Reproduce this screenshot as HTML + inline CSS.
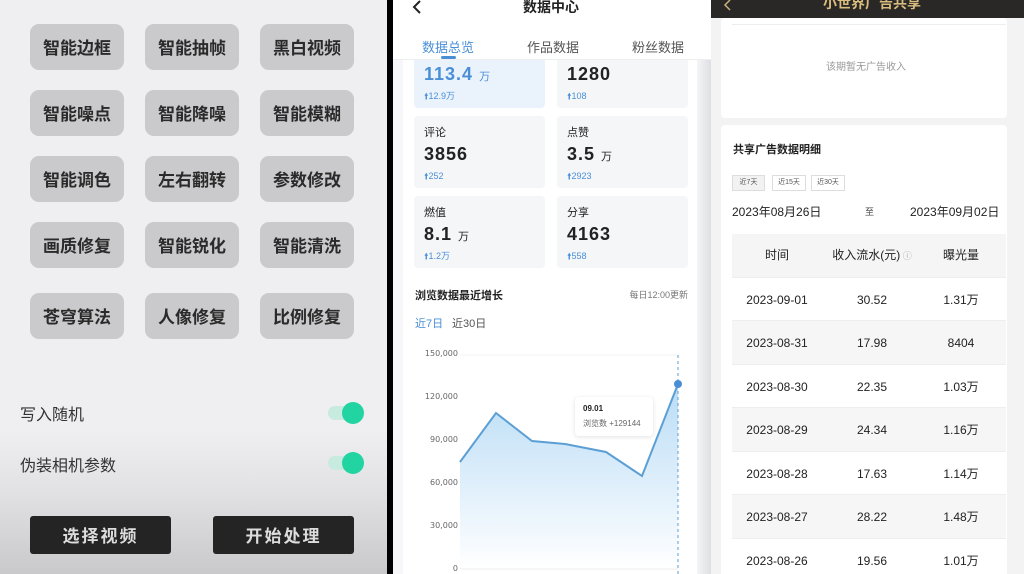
<!DOCTYPE html>
<html><head><meta charset="utf-8"><style>
*{margin:0;padding:0;box-sizing:border-box}
html,body{width:1024px;height:574px;overflow:hidden}
body{position:relative;font-family:"Liberation Sans","Noto Sans CJK SC",sans-serif;background:#000}
.a{position:absolute}
#L{left:0;top:0;width:387px;height:574px;background:linear-gradient(#efeef0 0,#efeef0 430px,#e2e2e4 490px,#c9c9cb 574px)}
.b{position:absolute;width:94px;height:46px;background:#cacacc;border-radius:9px;color:#2a2a2a;font-size:17px;font-weight:bold;text-align:center;line-height:46px;font-family:"Noto Sans CJK SC",sans-serif}
.lab{position:absolute;left:20px;font-size:16px;color:#333;font-family:"Noto Sans CJK SC",sans-serif}
.tg{position:absolute;left:328px;width:34px;height:14px;border-radius:7px;background:#c7ebdf}
.tg i{position:absolute;right:-2px;top:-4px;width:22px;height:22px;border-radius:50%;background:#22d4a2}
.db{position:absolute;top:516px;width:141px;height:38px;background:#242424;border-radius:3px;color:#ddd;font-size:17px;font-weight:bold;text-align:center;line-height:38px;letter-spacing:2px;font-family:"Noto Sans CJK SC",sans-serif}
#M{left:393px;top:0;width:318px;height:574px;background:#fff;overflow:hidden}
.c{position:absolute;width:131px;height:72px;background:#f5f6f8;border-radius:4px}
.c .t{position:absolute;left:10px;top:8px;font-size:11px;color:#222}
.c .v{position:absolute;left:10px;top:28px;font-size:18px;font-weight:bold;color:#222;letter-spacing:1px}
.c .v small{font-size:11px;font-weight:normal}
.c .u{position:absolute;left:10px;top:53px;font-size:9px;color:#4a8fd6}
.yl{position:absolute;right:253px;font-size:8px;color:#666;font-family:"DejaVu Sans",sans-serif}
#R{left:711px;top:0;width:313px;height:574px;background:#f3f3f3;overflow:hidden}
.rw{position:absolute;left:21px;width:274px;height:44px;font-size:12px;color:#222}
.rw span{position:absolute;top:0;line-height:44px;text-align:center;width:90px}
</style></head><body>
<div id="L" class="a">
<div class="b" style="left:30px;top:24px">智能边框</div>
<div class="b" style="left:145px;top:24px">智能抽帧</div>
<div class="b" style="left:260px;top:24px">黑白视频</div>
<div class="b" style="left:30px;top:90px">智能噪点</div>
<div class="b" style="left:145px;top:90px">智能降噪</div>
<div class="b" style="left:260px;top:90px">智能模糊</div>
<div class="b" style="left:30px;top:156px">智能调色</div>
<div class="b" style="left:145px;top:156px">左右翻转</div>
<div class="b" style="left:260px;top:156px">参数修改</div>
<div class="b" style="left:30px;top:222px">画质修复</div>
<div class="b" style="left:145px;top:222px">智能锐化</div>
<div class="b" style="left:260px;top:222px">智能清洗</div>
<div class="b" style="left:30px;top:293px">苍穹算法</div>
<div class="b" style="left:145px;top:293px">人像修复</div>
<div class="b" style="left:260px;top:293px">比例修复</div>
<div class="lab" style="top:401px">写入随机</div>
<div class="tg" style="top:406px"><i></i></div>
<div class="lab" style="top:452px">伪装相机参数</div>
<div class="tg" style="top:456px"><i></i></div>
<div class="db" style="left:30px">选择视频</div>
<div class="db" style="left:213px">开始处理</div>
</div>
<div id="M" class="a">
<div class="a" style="left:304px;top:60px;width:14px;height:514px;background:linear-gradient(90deg,#f4f5f7,#dedfe3)"></div>
<div class="a" style="left:0;top:60px;width:10px;height:514px;background:#f7f7f9"></div>
<div class="c" style="left:21px;top:36px;background:#eaf3fc"><div class="v" style="color:#4a8fd6">113.4 <small>万</small></div><div class="u">🠙12.9万</div></div>
<div class="c" style="left:164px;top:36px"><div class="v">1280</div><div class="u">🠙108</div></div>
<div class="c" style="left:21px;top:116px"><div class="t">评论</div><div class="v">3856</div><div class="u">🠙252</div></div>
<div class="c" style="left:164px;top:116px"><div class="t">点赞</div><div class="v">3.5 <small>万</small></div><div class="u">🠙2923</div></div>
<div class="c" style="left:21px;top:196px"><div class="t">燃值</div><div class="v">8.1 <small>万</small></div><div class="u">🠙1.2万</div></div>
<div class="c" style="left:164px;top:196px"><div class="t">分享</div><div class="v">4163</div><div class="u">🠙558</div></div>
<div class="a" style="left:0;top:0;width:318px;height:60px;background:#fff;z-index:5;border-bottom:1px solid #eee">
<svg class="a" style="left:18px;top:0" width="14" height="16"><path d="M9 1 L3 7 L9 13" stroke="#222" stroke-width="2" fill="none"/></svg>
<div class="a" style="left:130px;top:-3px;font-size:14px;font-weight:bold;color:#222">数据中心</div>
<div class="a" style="left:29px;top:37px;font-size:13px;color:#4a8fd6">数据总览</div>
<div class="a" style="left:134px;top:37px;font-size:13px;color:#555">作品数据</div>
<div class="a" style="left:239px;top:37px;font-size:13px;color:#555">粉丝数据</div>
<div class="a" style="left:48px;top:56px;width:15px;height:3px;background:#4a8fd6;border-radius:2px"></div>
</div>
<div class="a" style="left:22px;top:287px;font-size:11px;font-weight:bold;color:#222">浏览数据最近增长</div>
<div class="a" style="right:23px;top:288px;font-size:9px;color:#777">每日12:00更新</div>
<div class="a" style="left:22px;top:315px;font-size:11px;color:#4a8fd6">近7日</div>
<div class="a" style="left:59px;top:315px;font-size:11px;color:#555">近30日</div>
<div class="yl" style="top:349px">150,000</div>
<div class="yl" style="top:392px">120,000</div>
<div class="yl" style="top:435px">90,000</div>
<div class="yl" style="top:478px">60,000</div>
<div class="yl" style="top:521px">30,000</div>
<div class="yl" style="top:564px">0</div>
<svg class="a" style="left:0;top:340px" width="318" height="234">
<defs><linearGradient id="g" x1="0" y1="0" x2="0" y2="1"><stop offset="0" stop-color="#b9dcf6"/><stop offset="1" stop-color="#fff"/></linearGradient></defs>
<line x1="67" y1="15" x2="285" y2="15" stroke="#f3f3f3"/>
<path d="M67 122 L103 73 L139 101 L172 104 L213 112 L249 136 L285 44 L285 229 L67 229Z" fill="url(#g)"/>
<path d="M67 122 L103 73 L139 101 L172 104 L213 112 L249 136 L285 44" stroke="#5b9fd4" stroke-width="2" fill="none"/>
<line x1="285" y1="15" x2="285" y2="234" stroke="#5b9fd4" stroke-dasharray="3 3"/>
<circle cx="285" cy="44" r="4" fill="#4a8fd6"/>
<line x1="67" y1="229" x2="285" y2="229" stroke="#eee"/>
</svg>
<div class="a" style="left:182px;top:397px;width:78px;height:39px;background:#fff;border-radius:4px;box-shadow:0 1px 5px rgba(0,0,0,.12)">
<div class="a" style="left:8px;top:7px;font-size:8px;font-weight:bold;color:#222">09.01</div>
<div class="a" style="left:8px;top:21px;font-size:8px;color:#666">浏览数 +129144</div></div>
</div>
<div id="R" class="a">
<div class="a" style="left:0;top:0;width:313px;height:18px;background:#2a2826"></div>
<svg class="a" style="left:12px;top:0" width="10" height="12"><path d="M7 0 L2 5 L7 10" stroke="#c9b27a" stroke-width="1.5" fill="none"/></svg>
<div class="a" style="left:112px;top:-7px;font-size:14px;color:#d8bd7e;font-weight:bold">小世界广告共享</div>
<div class="a" style="left:10px;top:18px;width:286px;height:100px;background:#fff;border-radius:4px"></div>
<div class="a" style="left:21px;top:24px;width:274px;height:1px;background:#eee"></div>
<div class="a" style="left:115px;top:58px;font-size:10px;color:#999">该期暂无广告收入</div>
<div class="a" style="left:10px;top:125px;width:286px;height:460px;background:#fff;border-radius:4px"></div>
<div class="a" style="left:22px;top:141px;font-size:11px;font-weight:bold;color:#222">共享广告数据明细</div>
<div class="a" style="left:21px;top:175px;width:33px;height:16px;border:1px solid #ddd;background:#f2f2f2;font-size:7px;color:#555;text-align:center;line-height:14px">近7天</div>
<div class="a" style="left:61px;top:175px;width:34px;height:16px;border:1px solid #ddd;font-size:7px;color:#555;text-align:center;line-height:14px">近15天</div>
<div class="a" style="left:100px;top:175px;width:34px;height:16px;border:1px solid #ddd;font-size:7px;color:#555;text-align:center;line-height:14px">近30天</div>
<div class="a" style="left:21px;top:203px;font-size:12px;color:#222">2023年08月26日</div>
<div class="a" style="left:154px;top:205px;font-size:9px;color:#444">至</div>
<div class="a" style="left:199px;top:203px;font-size:12px;color:#222">2023年09月02日</div>
<div class="rw" style="top:234px;height:43px;background:#f5f5f5;font-size:12px"><span style="left:0;line-height:43px">时间</span><span style="left:90px;line-height:43px;width:100px">收入流水(元)<small style="color:#aaa;font-size:9px"> ⓘ</small></span><span style="left:184px;line-height:43px">曝光量</span></div>
<div class="rw" style="top:277px;border-top:1px solid #eee"><span style="left:0">2023-09-01</span><span style="left:95px">30.52</span><span style="left:184px">1.31万</span></div>
<div class="rw" style="top:320px;background:#f6f6f6;border-top:1px solid #eee"><span style="left:0">2023-08-31</span><span style="left:95px">17.98</span><span style="left:184px">8404</span></div>
<div class="rw" style="top:364px;border-top:1px solid #eee"><span style="left:0">2023-08-30</span><span style="left:95px">22.35</span><span style="left:184px">1.03万</span></div>
<div class="rw" style="top:407px;background:#f6f6f6;border-top:1px solid #eee"><span style="left:0">2023-08-29</span><span style="left:95px">24.34</span><span style="left:184px">1.16万</span></div>
<div class="rw" style="top:451px;border-top:1px solid #eee"><span style="left:0">2023-08-28</span><span style="left:95px">17.63</span><span style="left:184px">1.14万</span></div>
<div class="rw" style="top:494px;background:#f6f6f6;border-top:1px solid #eee"><span style="left:0">2023-08-27</span><span style="left:95px">28.22</span><span style="left:184px">1.48万</span></div>
<div class="rw" style="top:538px;border-top:1px solid #eee"><span style="left:0">2023-08-26</span><span style="left:95px">19.56</span><span style="left:184px">1.01万</span></div>
</div>
</body></html>
